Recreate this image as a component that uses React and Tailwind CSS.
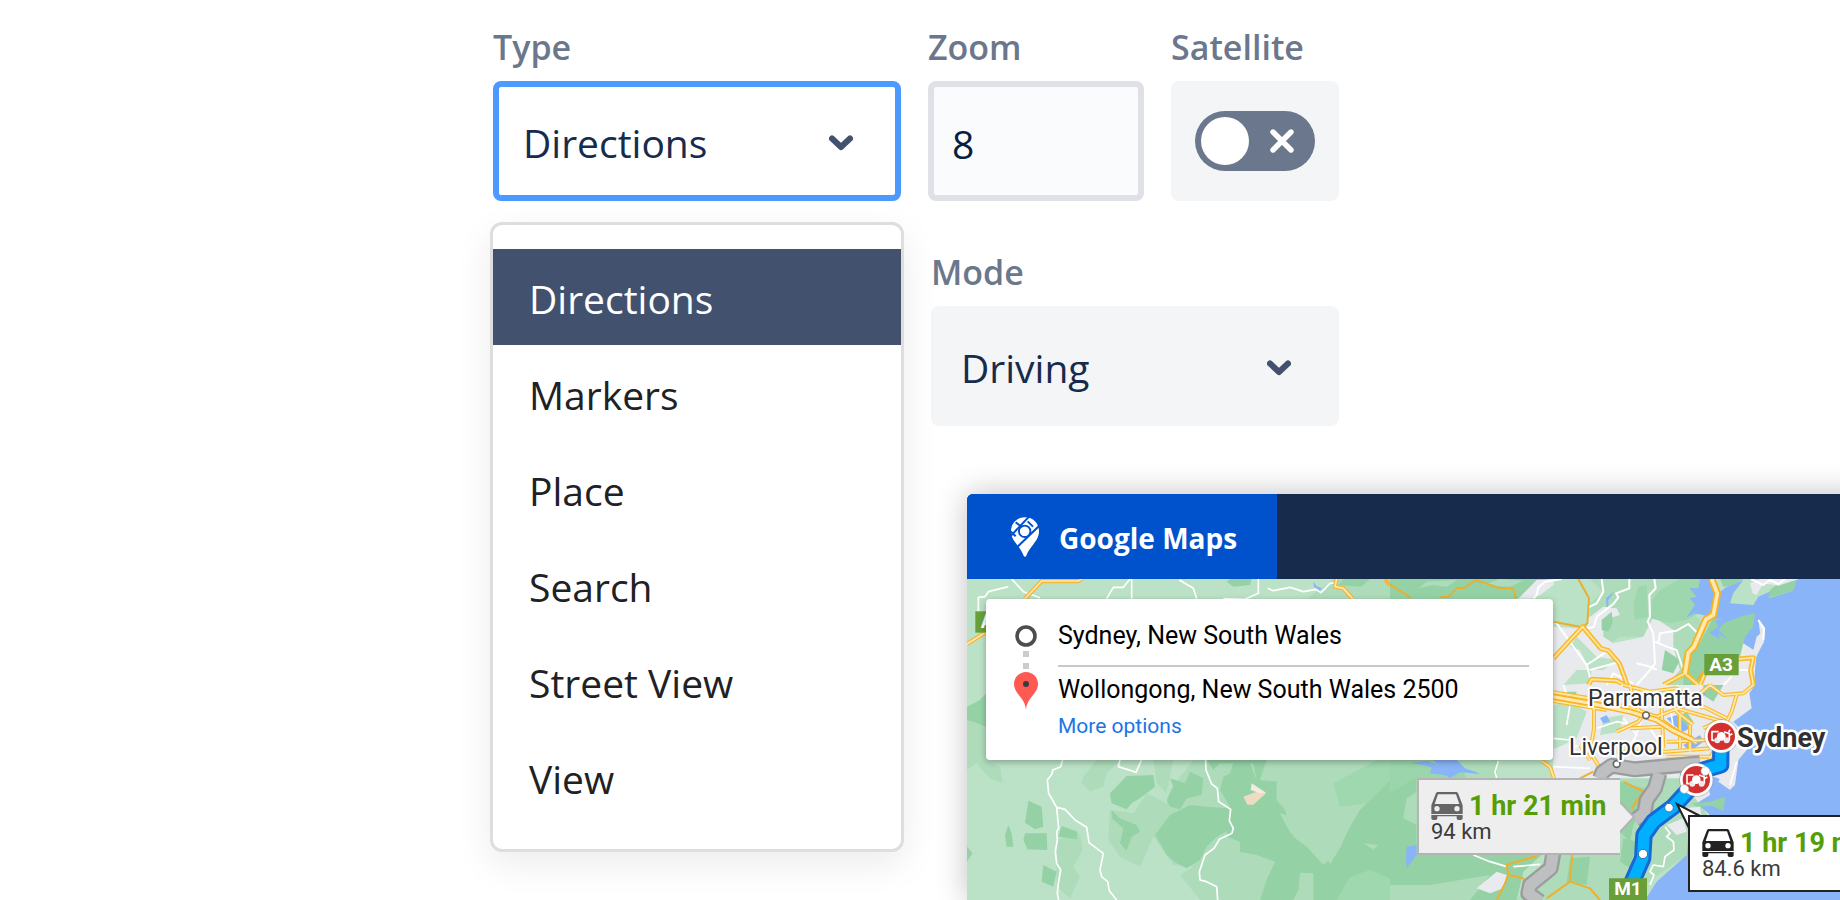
import React from "react";

const TYPES = ["Directions", "Markers", "Place", "Search", "Street View", "View"];

const labelClass = "mb-2.5 block text-[34px] leading-[48px] font-semibold text-[#6b778c]";

function Chevron() {
  return (
    <svg className="pointer-events-none absolute top-1/2 right-12 h-6 w-6 -translate-y-1/2" viewBox="0 0 24 24" fill="none" aria-hidden="true">
      <path d="M3 9.5 12 18 21 9.5" stroke="#42526e" strokeWidth="6" strokeLinecap="round" strokeLinejoin="round" />
    </svg>
  );
}

function TypeField() {
  return (
    <div className="w-[408px]">
      <label htmlFor="type" className={labelClass}>Type</label>
      <div className="relative">
        <select id="type" defaultValue="Directions" className="h-[120px] w-full appearance-none rounded-lg border-[6px] border-[#4c9aff] bg-white pt-1 pl-6 text-[#172b4d] outline-none">
          {TYPES.map((t) => <option key={t}>{t}</option>)}
        </select>
        <Chevron />
        <ul role="listbox" aria-label="Type" className="absolute -inset-x-[3px] top-[141px] z-10 rounded-xl border-[3px] border-[#dedede] bg-white py-6 text-[#202124] shadow-[0_12px_36px_rgba(0,0,0,0.08)]">
          {TYPES.map((t, i) => (
            <li key={t} role="option" aria-selected={i === 0} className={i === 0 ? "h-24 bg-[#42526e] pt-0.5 pl-9 leading-[96px] text-white" : "h-24 pt-0.5 pl-9 leading-[96px]"}>
              {t}
            </li>
          ))}
        </ul>
      </div>
    </div>
  );
}

function ZoomField() {
  return (
    <div className="w-[216px]">
      <label htmlFor="zoom" className={labelClass}>Zoom</label>
      <input id="zoom" type="text" inputMode="numeric" defaultValue="8" className="h-[120px] w-full rounded-lg border-[6px] border-[#dfe1e6] bg-[#fafbfc] pt-1 pl-[18px] text-[#091e42] outline-none" />
    </div>
  );
}

function SatelliteField() {
  return (
    <div className="w-[168px]">
      <label htmlFor="satellite" className={labelClass}>Satellite</label>
      <div className="flex h-[120px] items-center justify-center rounded-lg bg-[#f4f5f7]">
        <div className="relative h-[60px] w-[120px]">
          <input id="satellite" type="checkbox" role="switch" className="h-full w-full appearance-none rounded-full bg-[#6b778c]" />
          <span className="pointer-events-none absolute top-1.5 left-1.5 h-12 w-12 rounded-full bg-white" />
          <svg className="pointer-events-none absolute top-[18px] right-[21px] h-6 w-6" viewBox="0 0 24 24" stroke="#fff" strokeWidth="5.4" strokeLinecap="round" aria-hidden="true">
            <path d="M3 3 21 21M21 3 3 21" />
          </svg>
        </div>
      </div>
    </div>
  );
}

function ModeField() {
  return (
    <div className="col-start-2">
      <label htmlFor="mode" className={labelClass}>Mode</label>
      <div className="relative">
        <select id="mode" defaultValue="Driving" className="h-[120px] w-full appearance-none rounded-lg bg-[#f4f5f7] pt-1 pl-[30px] text-[#172b4d] outline-none">
          <option>Driving</option>
          <option>Walking</option>
        </select>
        <Chevron />
      </div>
    </div>
  );
}

function MapsLogo() {
  return (
    <svg className="h-10 w-7" viewBox="0 0 84 118" aria-hidden="true">
      <path fill="#fff" d="M42 0C18 0 0 18 0 42c0 16 8 28 18 40 9 11 16 22 20 33 1 4 7 4 8 0 4-11 10-20 19-31 11-14 19-26 19-42C84 18 66 0 42 0Z" />
      <g stroke="#0052cc" strokeWidth="6" fill="none">
        <path d="M14 15 36 32M54 -2 0 55M84 26 18 90M-2 42 14 57M50 12 66 28" />
        <circle cx="41" cy="42" r="17" />
      </g>
      <circle cx="41" cy="42" r="14" fill="#fff" />
    </svg>
  );
}

function CarIcon({ className }) {
  return (
    <svg className={className} viewBox="0 0 94 84" fill="currentColor" aria-hidden="true">
      <path fillRule="evenodd" d="M21 0h52c4 0 7 2 8 6l13 34v38c0 4-2 6-6 6h-6c-4 0-6-2-6-6v-5H18v5c0 4-2 6-6 6H6c-4 0-6-2-6-6V40L13 6c1-4 4-6 8-6ZM20 7 10 36h74L74 7H20Zm-3 35a8 8 0 1 0 0 16 8 8 0 0 0 0-16Zm60 0a8 8 0 1 0 0 16 8 8 0 0 0 0-16ZM0 66v3h94v-3H0Z" />
    </svg>
  );
}

function Incident({ x, y }) {
  return (
    <g transform={`translate(${x} ${y})`}>
      <circle r="52" fill="#8a8a8a" opacity=".35" />
      <circle r="49" fill="#fff" />
      <circle r="41" fill="#d3302f" />
      <path d="M-8-14H-28V12H-20M8-14 24-8V10L14 14M22-12l4-8M26-4l7-4" fill="none" stroke="#fff" strokeWidth="5" strokeLinejoin="round" />
      <circle cx="-12" cy="12" r="9" fill="#e8eaed" />
      <circle cx="16" cy="12" r="9" fill="#e8eaed" />
      <circle r="13" fill="#fff" />
    </g>
  );
}

function Terrain() {
  return (
    <svg className="absolute inset-0 h-full w-full" viewBox="967 579 921 321" preserveAspectRatio="xMinYMin slice" aria-hidden="true">
      <rect x="967" y="579" width="921" height="321" fill="#bbe2c6" />

      {/* western ranges */}
      <g transform="translate(940 470) scale(.33333)">
        <g fill="#aedcba">
          <path d="M81 740 110 700 138 690V869L180 890 188 940 150 925 110 880 81 900ZM430 920 470 870H540L500 910 490 950 450 965 425 940ZM510 1020 580 1030 620 970 680 1000 690 960 760 870H1350V1290H780L720 1215 760 1190 700 1185 640 1100 600 1190 540 1160 505 1110ZM350 1110 420 1090 428 1140 400 1190 420 1220 390 1285 350 1250ZM640 869H700L680 970 650 940Z" />
          <path d="M1180 327H1350V386H1100L1150 350Z" />
        </g>
        <g fill="#94d2a5">
          <path d="M81 710 120 690 138 670V770L100 755 81 750ZM510 970 560 918 640 915 645 950 600 985 575 1000 560 1018 515 1000ZM680 990 700 950 690 925 735 940 750 905 790 925 785 975 740 985 720 1018 690 1010ZM265 992 305 1010 310 1070 285 1078 255 1058ZM255 1090 320 1090 322 1140 262 1138 250 1110ZM205 1065 215 1090 220 1130 200 1130 195 1095ZM365 1068 413 1085 410 1108 355 1100ZM310 1185 350 1205 340 1250 305 1235ZM515 1020 540 1045 590 1065 600 1085 575 1100 560 1142 540 1120 550 1075 515 1045ZM81 1130 98 1150 81 1175ZM645 1095 690 1035 750 1005 800 1010 870 1015 878 1075 830 1100 800 1130 780 1170 740 1195 710 1180 680 1155 660 1120ZM800 869H980L960 930 1010 935 1010 990 1035 1020 1060 1100 1100 1130 1150 1185 1190 1150 1210 1100 1260 1020 1350 930V1290H1120L1120 1210 1080 1208 1075 1260 1060 1290H960L980 1230 1005 1175 950 1155 900 1145 900 1115 860 1100 870 1010 840 960 850 920 870 910 820 900ZM860 335 880 350 930 345 935 327H870ZM1195 345 1265 350 1290 327H1210Z" />
        </g>
        <g fill="#aedcba">
          <path d="M870 910 880 880H840L820 900ZM1060 1010 1110 980 1160 990 1180 940 1200 870H1040L1090 930ZM1070 1000 1150 1050 1200 1040 1235 1005 1258 1020 1225 1080 1200 1135 1170 1182 1150 1145 1090 1120 1058 1085ZM1270 1120 1315 1125 1300 1138ZM900 1200 970 1240 950 1275 900 1290ZM800 1150 850 1105 880 1130 880 1180 840 1230 800 1200ZM1020 1030 1060 1040 1055 1095 1035 1060ZM930 880 950 930 940 880Z" />
        </g>
        <path fill="#9fd7ae" d="M1180 940 1310 870H1350V930L1280 1000 1200 1010ZM1230 1220 1290 1200 1350 1225V1290H1190Z" />
        <path fill="#eddcc3" d="M910 980 950 965 978 970 940 1004 922 1004Z" />
        <path fill="#f3ebdf" d="M935 940 978 968 960 970 932 960Z" />
        <g fill="none" stroke="#fff" strokeWidth="5" strokeLinejoin="round">
          <path d="M205 350 145 365 135 380 115 382V430M215 327 250 365 300 383M500 386 520 352H550L570 327M575 327V386M718 330 760 355 770 386M850 386 915 388 955 370V327M983 355 1000 362 1050 352 1090 365 1128 358 1143 368 1170 340 1190 338M368 869 362 890 338 900 336 912 322 930 326 970 350 1012 356 1075 350 1085 352 1110 346 1145 350 1180 362 1200 355 1240 352 1270 356 1290M350 1012 375 1018 405 1050 440 1072 447 1118 490 1150 480 1200 485 1220 503 1235 508 1262 530 1290M540 869 535 890 588 907 605 869M797 869 798 900 815 942 832 955 836 995 872 1018 868 1052 880 1075 876 1090 838 1108 822 1135 795 1155 778 1205 780 1230 800 1235 830 1250 833 1290" />
        </g>
        <path d="M81 522 140 485M255 386 305 333H415L425 327M1190 327 1185 350 1210 355 1238 386M1335 327 1350 345" fill="none" stroke="#f4b63d" strokeWidth="13" />
        <path d="M81 522 140 485M255 386 305 333H415L425 327M1190 327 1185 350 1210 355 1238 386" fill="none" stroke="#ffe9b0" strokeWidth="5" />
        <path d="M1120 335 1130 348 1145 355 1140 362 1122 350Z" fill="#8ab4f8" />
        <path d="M106 424H150V488H106Z" fill="#689f38" />
        <text x="122" y="474" fontSize="58" fontWeight="700" fill="#fff" className="font-[Roboto,sans-serif]">A</text>
      </g>

      {/* city, northern half */}
      <g transform="translate(1390 470) scale(.33333)">
        <path fill="#94d2a5" d="M0 327H470L440 360 380 386H0Z" />
        <path fill="#aedcba" d="M85 355 110 335 200 330 170 350 130 345ZM280 345 330 327 400 332 360 350ZM600 327H930L900 420 950 470 910 645H800L760 500 690 500 660 520 600 480Z" />
        <path fill="#e8eaed" d="M440 330 515 327 450 375 420 386H385ZM490 470 560 475 600 440 640 410 680 415 690 435 640 450 640 500 670 520 760 500 790 440 850 480 850 530 870 600 830 645H490Z" />
        <path fill="#9ed7ad" d="M785 390 810 360 870 327H960L980 400 890 450 840 460 780 445ZM730 400 745 350 770 345 775 440 735 450Z" />
        <path fill="#94d2a5" d="M635 450 665 425 668 460 655 485 635 480ZM880 570 930 520 970 440 1100 430 1080 520 1040 570 1020 645H880ZM815 600 825 540 870 570 850 610Z" />
        <path fill="#bbe2c6" d="M490 327H600L640 365 600 400 590 470 500 450ZM520 645 560 600 600 600 570 540 540 530 560 500 620 560 680 570 640 600 605 600 600 640Z" />
        <path fill="#8ab4f8" d="M1225 327H1350V645H1085L1100 560 1120 510 1115 470 1105 450 1110 490 1090 540 1060 520 1065 500 1090 470 1095 430 1050 440 1000 460 985 480 1015 510 985 490 990 508 957 488 985 470 975 450 1000 450 960 440 915 430 890 442 915 405 900 385 920 380 898 355 925 355 930 327H960L985 370 1010 350 1060 330 1030 370 1020 400 1090 405 1105 380 1150 360 1140 384 1200 365 1210 335ZM648 385 675 362 655 390V410H650Z" />
        <path fill="#8ab4f8" d="M1340 327H1500V645H1340Z" />
        <path fill="#94d2a5" d="M1140 360 1165 340 1220 330 1210 362 1135 385ZM990 327H1060L1030 345 1000 350Z" />
        <path fill="#e8eaed" d="M1080 340 1110 327H1225L1165 347 1120 340 1100 375 1088 370ZM1105 450 1125 475 1122 515 1098 560 1092 645H920L950 615 1040 600 1060 520 1090 540 1100 500 1112 490Z" />
        <g fill="none" stroke="#fff" strokeWidth="6" strokeLinejoin="round">
          <path d="M515 327 465 335 445 352 440 375 430 386M635 327 640 365 620 400 595 412M718 327V355L678 370 685 382 670 402 620 440 612 470 592 475M793 327 797 355 778 375 780 440 773 455 790 490 795 580 780 600 740 645M490 455 500 460 590 585 605 640M590 585 650 545M600 600 690 575M795 515 830 530 860 540 880 600M805 520 810 490 860 482 895 462 920 487M1105 450 1122 475 1120 510M1083 327 1120 345 1140 330 1165 342 1185 327M740 580 780 590 800 600M650 645 670 610 730 640M1050 600 1085 600M1000 645 1025 620" />
        </g>
        <path d="M0 343 62 384M150 382 175 380 202 354H222L257 330 325 353 370 356 378 386M565 327 597 385 592 460 578 472 490 455M910 645 945 600" fill="none" stroke="#e8b02f" strokeWidth="6" />
        <path d="M490 565 578 470 632 535 655 542 688 580 712 645M595 645 605 628 680 632 712 650M820 645 885 610 925 645M1045 567 1090 563 1082 600 1090 645M930 645 945 610" fill="none" stroke="#f9bb2d" strokeWidth="15" strokeLinejoin="round" />
        <path d="M490 565 578 470 632 535 655 542 688 580 712 645M595 645 605 628 680 632 712 650M820 645 885 610 925 645M1045 567 1090 563 1082 600 1090 645M930 645 945 610" fill="none" stroke="#ffe7a5" strokeWidth="5" strokeLinejoin="round" />
        <path d="M965 327 982 370 970 435 948 448 912 530 895 548 885 612" fill="none" stroke="#f9b31f" strokeWidth="22" strokeLinejoin="round" />
        <path d="M965 327 982 370 970 435 948 448 912 530 895 548 885 612" fill="none" stroke="#ffe9b0" strokeWidth="11" strokeLinejoin="round" />
        <path d="M943 552H1046V616H943Z" fill="#689f38" />
      </g>

      {/* city, southern half */}
      <g transform="translate(1390 685) scale(.33333)">
        <path fill="#e8eaed" d="M490 0H1100V400H490Z" />
        <path fill="#bbe2c6" d="M490 60 540 50 590 80 560 160 500 190H490ZM640 100 700 90 690 140 630 150ZM300 225H460L480 280H300Z" />
        <path fill="#9bd5ab" d="M0 222H320V280H80L0 330Z" />
        <path fill="#94d2a5" d="M0 325 80 275V645H0ZM80 505H460L400 560 380 645H80ZM940 0H1000L970 50 940 30ZM530 20 560 20 550 60ZM860 100 890 80 910 110 880 130Z" />
        <path fill="#aedcba" d="M0 600 120 600 300 570 240 645H0ZM200 225 320 225 315 280H230ZM50 340 80 320V420L40 400ZM540 280H870L960 400 890 510 760 600 710 645H380L480 520 560 470Z" />
        <path fill="#94d2a5" d="M690 290 760 310 780 330 730 420 720 470 690 440ZM700 460 740 470 720 550 690 530ZM540 520 600 515 590 600 530 590Z" />
        <path fill="#e8eaed" d="M260 610 320 560 350 570 340 610 300 625ZM830 420 880 400 890 440 860 450Z" />
        <path fill="#8ab4f8" d="M1095 0H1500V645H765L800 590 890 510 900 390 965 395 920 355 960 330 950 270 985 280 1020 312 1040 250 1048 210 1080 185 1060 140 1030 110 1085 70 1078 25ZM830 100 860 90 900 130 880 140 850 120ZM630 100 650 90 660 110 640 115ZM880 180 930 150 940 170 900 200ZM60 235 110 228 145 240 130 225 200 225 225 250 260 262 270 268 245 265 210 262 180 280 165 270 120 265 125 248 100 240ZM50 485 80 480V510L50 550 48 520ZM870 250 880 260 870 280ZM910 20 950 25 930 40Z" />
        <path fill="#94d2a5" d="M905 355 960 350 1006 335 1000 378 965 362 920 365Z" />
        <path fill="#e8eaed" d="M1020 180 1078 185 1045 225 1035 300 1020 315 985 290 1010 250ZM880 370 930 365 935 395H900Z" />
        <g fill="none" stroke="#fff" strokeWidth="5" strokeLinejoin="round">
          <path d="M490 160 540 165M520 0 540 60 530 120M640 20 660 60 720 60M700 100 740 150 720 180M540 180 600 190M840 60 850 130 900 160M860 0 880 60M320 280 315 260 325 228M490 245 600 250M780 130 820 190M760 90 720 200M825 425 840 445 830 455 850 470 852 495 825 515 820 545 790 540 780 560 792 570 780 600M250 510 300 530 350 545M370 545 450 538M1040 230 1020 300M620 130 680 110 730 120" />
        </g>
        <g fill="none" strokeLinejoin="round">
          <path d="M490 22 600 40 720 68 800 95 850 130 920 175M490 48 650 75M612 60V130L600 200 630 250M720 0 735 60 760 90 745 110 680 140M815 70 820 190M870 85V190M720 130 820 125M680 200 830 200 960 190M830 170 960 165M830 215 960 215M800 95 890 60 960 0M840 40 860 80 910 120M860 70 930 90 1000 110M910 20 930 60 1010 100M960 0 1000 30 1060 25 1090 0M1040 30 1025 80 1010 110M570 180 600 225M455 228 480 245 492 280M700 0 780 20 860 10 940 70M940 130 980 110M900 120V200M970 200 950 240" stroke="#f9bb2d" strokeWidth="12" />
          <path d="M490 22 600 40 720 68 800 95 850 130 920 175M490 48 650 75M612 60V130L600 200 630 250M720 0 735 60 760 90 745 110 680 140M815 70 820 190M870 85V190M720 130 820 125M680 200 830 200 960 190M830 170 960 165M830 215 960 215M800 95 890 60 960 0M840 40 860 80 910 120M860 70 930 90 1000 110M910 20 930 60 1010 100M960 0 1000 30 1060 25 1090 0M1040 30 1025 80 1010 110M570 180 600 225M455 228 480 245 492 280M700 0 780 20 860 10 940 70M940 130 980 110M900 120V200M970 200 950 240" stroke="#ffe9b0" strokeWidth="5" />
          <path d="M490 35 600 55 720 80 800 105 850 137 910 165" stroke="#f9b31f" strokeWidth="18" />
          <path d="M490 35 600 55 720 80 800 105 850 137 910 165" stroke="#ffe9b0" strokeWidth="9" />
          <path d="M440 513 380 530 350 540 355 570 345 595 320 645M355 570 400 580 410 645M547 510 540 590 470 640M540 590 600 610 630 645M700 290 760 320 725 370M570 280 610 260" stroke="#efaf2b" strokeWidth="6" />
        </g>

        {/* alternative and chosen routes */}
        <g fill="none" strokeLinejoin="round">
          <path d="M630 280 637 262 665 242 735 253 850 242 930 235M808 265 795 310 770 345 763 385 735 405M490 505 482 550 420 600 415 625 450 650" stroke="#9a9c9e" strokeWidth="48" />
          <path d="M630 280 637 262 665 242 735 253 850 242 930 235M808 265 795 310 770 345 763 385 735 405M490 505 482 550 420 600 415 625 450 650" stroke="#bdbfc1" strokeWidth="34" />
          <path d="M993 165 992 240 940 255 900 310 850 365 790 410 762 450 758 520 725 595" stroke="#1967d2" strokeWidth="52" />
          <path d="M993 165 992 240 940 255 900 310 850 365 790 410 762 450 758 520 725 595" stroke="#00b0ff" strokeWidth="34" />
        </g>
        <Incident x={994} y={154} />
        <Incident x={919} y={284} />
        <g fill="#fff" stroke="#2b6fae" strokeWidth="3">
          <circle cx="837" cy="368" r="13" />
          <circle cx="759" cy="507" r="14" />
        </g>
        <g fill="#fff" stroke="#b9b9b9" strokeWidth="2">
          <circle cx="883" cy="312" r="13" />
          <circle cx="946" cy="258" r="13" />
        </g>
        <g fill="#fff" stroke="#666" strokeWidth="5">
          <circle cx="768" cy="91" r="10" />
          <circle cx="680" cy="237" r="10" />
        </g>
        <path d="M657 580H771V645H657Z" fill="#689f38" />
      </g>

      <g className="font-[Roboto,sans-serif]" fill="#303134" stroke="#fff" strokeLinejoin="round" paintOrder="stroke">
        <text x="1588" y="706" fontSize="23" strokeWidth="4">Parramatta</text>
        <text x="1569" y="755" fontSize="23" strokeWidth="4">Liverpool</text>
        <text x="1737" y="747" fontSize="27" fontWeight="700" strokeWidth="5">Sydney</text>
        <text x="1721" y="671" textAnchor="middle" fontSize="19" fontWeight="700" fill="#fff" stroke="none">A3</text>
        <text x="1628" y="895" textAnchor="middle" fontSize="19" fontWeight="700" fill="#fff" stroke="none">M1</text>
      </g>

      {/* callout pointers */}
      <path d="M1619 801 1634 817 1619 833" fill="#eee" stroke="#b4b4b4" strokeWidth="2" />
      <path d="M1690 830 1677 804 1702 817" fill="#fff" stroke="#222" strokeWidth="2" />
    </svg>
  );
}

function DirectionsPanel() {
  return (
    <div className="relative mt-5 ml-[19px] flex w-[567px] rounded bg-white pt-[19px] pr-6 pb-4 pl-7 shadow-[0_2px_6px_rgba(0,0,0,0.3)]">
      <svg className="mt-[7px] mr-5 h-[85px] w-6 shrink-0" viewBox="0 0 24 85" aria-hidden="true">
        <circle cx="12" cy="11" r="9" fill="none" stroke="#4d4d4d" strokeWidth="3.6" />
        <path d="M9 26h6v6H9zM9 38h6v6H9z" fill="#ccc" />
        <path d="M12 85C11 72 0 69 0 59a12 12 0 0 1 24 0c0 10-11 13-12 26Z" fill="#ff5a52" />
        <circle cx="12" cy="59" r="3" fill="#3b3b3b" />
      </svg>
      <div className="flex-1 text-[25px] text-black">
        <p className="border-b-2 border-[#c8c8c8] pb-[11px] leading-9">Sydney, New South Wales</p>
        <p className="mt-[5px] leading-9">Wollongong, New South Wales 2500</p>
        <a href="#options" className="block text-[21px] leading-9 text-[#1a73e8]">More options</a>
      </div>
    </div>
  );
}

function RouteCallout({ time, distance, className, iconClass }) {
  return (
    <div className={className}>
      <div className="flex items-center gap-1.5">
        <CarIcon className={iconClass} />
        <span className="text-[27px] leading-7 font-bold text-[#569e05]">{time}</span>
      </div>
      <div className="text-[22px] leading-6 text-[#3c3c3c]">{distance}</div>
    </div>
  );
}

function MapCard() {
  return (
    <section className="mt-[68px] -mr-12 ml-[calc(50%+47px)] flex flex-1 flex-col rounded-tl-md shadow-[0_0_30px_rgba(0,0,0,0.25)]">
      <header className="flex h-[85px] rounded-tl-md bg-[#172b4d]">
        <h2 className="flex w-[310px] items-center gap-5 rounded-tl-md bg-[#0052cc] pl-11 text-[28px] font-bold text-white">
          <MapsLogo />
          <span className="pt-0.5">Google Maps</span>
        </h2>
      </header>
      <div className="relative flex-1 overflow-hidden font-[Roboto,sans-serif]">
        <Terrain />
        <DirectionsPanel />
        <RouteCallout
          time="1 hr 21 min"
          distance="94 km"
          iconClass="h-7 w-8 text-[#666]"
          className="absolute top-[199px] left-[450px] h-[77px] w-[203px] border-2 border-r-0 border-[#b4b4b4] bg-[#eee] pt-3 pl-3 whitespace-nowrap"
        />
        <RouteCallout
          time="1 hr 19 min"
          distance="84.6 km"
          iconClass="h-7 w-8 text-[#222]"
          className="absolute top-[236px] left-[721px] h-[77px] w-[203px] border-2 border-[#222] bg-white pt-3 pl-3 whitespace-nowrap"
        />
      </div>
    </section>
  );
}

export default function App() {
  return (
    <main className="flex min-h-screen flex-col overflow-hidden bg-white pt-[23px] font-['Open_Sans',sans-serif] text-[39px] font-normal">
      <form className="mx-auto w-[854px] pr-2">
        <div className="relative z-10 flex gap-[27px]">
          <TypeField />
          <ZoomField />
          <SatelliteField />
        </div>
        <div className="mt-[47px] grid grid-cols-2 gap-[30px]">
          <ModeField />
        </div>
      </form>
      <MapCard />
    </main>
  );
}
